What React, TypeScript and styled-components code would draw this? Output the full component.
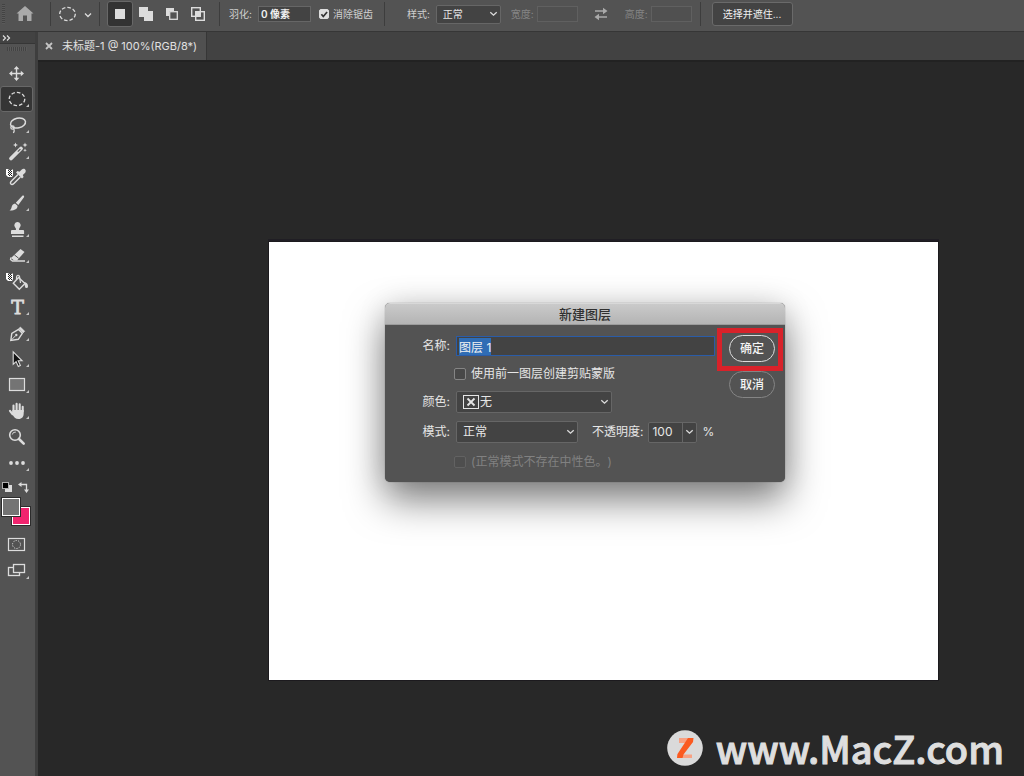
import React, { useEffect, useRef } from 'react';
import styled, { createGlobalStyle, css } from 'styled-components';

const GlobalStyle = createGlobalStyle`
  * { box-sizing: border-box; }
  html, body { margin: 0; height: 100%; }
  #root { height: 100%; }
  body {
    background: #282828;
    color: #dcdcdc;
    font: 10px/16px Inter, "Noto Sans CJK SC", sans-serif;
    text-spacing-trim: space-all;
    overflow: hidden;
  }
  button, input, select { font: inherit; color: inherit; margin: 0; padding: 0; }
  svg { display: block; flex: none; }
`;

const AppFrame = styled.div`
  display: flex;
  flex-direction: column;
  min-height: 100vh;
`;

/* ---------- options bar ---------- */

const OptionsBar = styled.header`
  display: flex;
  align-items: center;
  height: 32px;
  padding: 0 8px 3px 2px;
  background: #535353;
  border-bottom: 1px solid #363636;
  white-space: nowrap;
`;

const Grip = styled.span`
  width: 3px;
  height: 20px;
  background: repeating-linear-gradient(#434343 0 1px, #5a5a5a 1px 2px);
`;

const Divider = styled.span<{ $before?: number; $after?: number }>`
  width: 1px;
  height: 24px;
  flex: none;
  background: #3d3d3d;
  margin-left: ${p => p.$before ?? 8}px;
  margin-right: ${p => p.$after ?? 8}px;
`;

const BarButton = styled.button<{ $width?: number; $active?: boolean }>`
  display: flex;
  align-items: center;
  justify-content: center;
  flex: none;
  width: ${p => p.$width ?? 26}px;
  height: 26px;
  border: 1px solid ${p => (p.$active ? '#686868' : 'transparent')};
  border-radius: 3px;
  background: ${p => (p.$active ? '#333' : 'transparent')};
`;

const OptionLabel = styled.label<{ $before?: number; $gap?: number; $dim?: boolean }>`
  display: flex;
  align-items: center;
  gap: ${p => p.$gap ?? 6}px;
  margin-left: ${p => p.$before ?? 8}px;
  color: ${p => (p.$dim ? '#858585' : '#cfcfcf')};
`;

const OptionInput = styled.input<{ $width: number }>`
  width: ${p => p.$width}px;
  height: 16px;
  padding-left: 2px;
  border: 1px solid #666;
  background: #434343;
  color: #f0f0f0;
  font-weight: 600;
  &:disabled { background: #505050; border-color: #606060; }
`;

const SelectBox = styled.span<{ $width: number; $height: number; $inset: number }>`
  display: grid;
  align-items: center;
  width: ${p => p.$width}px;
  height: ${p => p.$height}px;
  border: 1px solid #666;
  border-radius: 2px;
  background: #434343;
  color: #e6e6e6;
  > * { grid-area: 1 / 1; }
  > svg:last-child { justify-self: end; margin-right: 2px; pointer-events: none; }
  > svg:first-child { margin-left: 6px; pointer-events: none; }
  select {
    appearance: none;
    width: 100%;
    height: 100%;
    padding-left: ${p => p.$inset}px;
    border: 0;
    background: transparent;
    outline: none;
  }
`;

const CheckInput = styled.input<{ $size: number }>`
  appearance: none;
  width: ${p => p.$size}px;
  height: ${p => p.$size}px;
  flex: none;
  border: 1px solid #858585;
  border-radius: 2px;
  background: #484848;
  &:disabled { border-color: #626262; background: #4e4e4e; }
  &:checked {
    border-color: #dedede;
    background: #dedede url("data:image/svg+xml,%3Csvg xmlns='http://www.w3.org/2000/svg' viewBox='0 0 10 10'%3E%3Cpath d='M2 5l2 2.4L8 2.6' fill='none' stroke='%23333' stroke-width='1.8'/%3E%3C/svg%3E") center / 9px no-repeat;
  }
`;

const MaskButton = styled.button`
  width: 81px;
  height: 24px;
  flex: none;
  border: 1px solid #6a6a6a;
  border-radius: 3px;
  background: #434343;
  color: #f0f0f0;
`;

/* ---------- tool bar ---------- */

const Body = styled.div`
  display: flex;
  flex: 1;
`;

const ToolBar = styled.aside`
  flex: none;
  width: 38px;
  border-right: 3px solid #3e3e3e;
  background: #535353;
`;

const Expander = styled.button`
  display: flex;
  align-items: center;
  width: 100%;
  height: 12px;
  padding-left: 2px;
  border: 0;
  border-bottom: 1px solid #363636;
  background: #424242;
`;

const ToolGrip = styled.div`
  width: 20px;
  height: 4px;
  margin: 3px 0 9px 7px;
  background: repeating-linear-gradient(90deg, #434343 0 1px, #5a5a5a 1px 2px);
`;

const ToolButton = styled.button<{ $active?: boolean }>`
  display: block;
  width: 33px;
  height: 26px;
  border: 0;
  border-radius: 3px;
  background: transparent;
  ${p => p.$active && css`
    background: #353535;
    box-shadow: inset 0 0 0 1px #686868;
  `}
`;

const ColorControls = styled.div`
  display: flex;
  justify-content: space-between;
  width: 29px;
  margin: 5px 0 4px 1px;
`;

const PlainButton = styled.button`
  display: block;
  border: 0;
  background: transparent;
`;

/* ---------- document area ---------- */

const MainColumn = styled.main`
  display: flex;
  flex: 1;
  flex-direction: column;
  min-width: 0;
`;

const TabBar = styled.nav`
  display: flex;
  height: 30px;
  background: #424242;
  border-bottom: 2px solid #222;
`;

const DocumentTab = styled.div`
  display: flex;
  align-items: center;
  gap: 9px;
  padding: 0 9px 0 7px;
  border-right: 1px solid #363636;
  background: #505050;
  font-size: 11px;
  color: #e0e0e0;
  white-space: nowrap;
`;

const Workspace = styled.section`
  position: relative;
  flex: 1;
  padding: 180px 86px 96px 231px;
  background: #282828;
`;

const Artboard = styled.div`
  position: relative;
  height: 438px;
  background: #fff;
  box-shadow: 0 0 0 1px #1c1a1e, 0 -2px 0 1px #201e24;
`;

const Dialog = styled.form`
  position: absolute;
  left: 116px;
  top: 61px;
  width: 400px;
  border-radius: 5px;
  background: #535353;
  box-shadow: 0 0 1px rgba(0, 0, 0, 0.6), 0 18px 38px rgba(0, 0, 0, 0.5), 0 0 30px rgba(0, 0, 0, 0.1);
  color: #e6e6e6;
  font-size: 12px;
`;

const DialogTitle = styled.h1`
  margin: 0;
  height: 22px;
  border-top: 1px solid #d8d8d8;
  border-bottom: 1px solid #9c9c9c;
  border-radius: 5px 5px 0 0;
  background: linear-gradient(#cacaca, #b4b4b4);
  color: #303030;
  font-size: 13px;
  font-weight: 500;
  line-height: 20px;
  text-align: center;
`;

const DialogBody = styled.div`
  display: flex;
  justify-content: space-between;
  padding: 6px 10px 5px 0;
`;

const Fields = styled.div`
  flex: 1;
`;

const FieldRow = styled.div<{ $height?: number }>`
  display: flex;
  align-items: center;
  height: ${p => p.$height ?? 30}px;
  white-space: nowrap;
`;

const FieldLabel = styled.label`
  width: 65px;
  margin-right: 6px;
  text-align: right;
`;

const CheckLabel = styled.label<{ $dim?: boolean }>`
  display: flex;
  align-items: center;
  gap: 5px;
  margin-left: 69px;
  color: ${p => (p.$dim ? '#818181' : 'inherit')};
`;

const NameInput = styled.input`
  width: 259px;
  height: 20px;
  padding-left: 2px;
  border: 1px solid #2a5ca8;
  background: #434343;
  outline: none;
  &::selection { background: #2f6db5; color: #f2f2f2; }
`;

const OpacityLabel = styled.label`
  margin: 0 5px 0 14px;
`;

const OpacityBox = styled.span`
  display: flex;
  width: 49px;
  height: 21px;
  margin-right: 5px;
  border: 1px solid #666;
  border-radius: 2px;
  background: #434343;
  input {
    width: 34px;
    padding-left: 3px;
    border: 0;
    border-right: 1px solid #666;
    background: transparent;
  }
  button {
    display: grid;
    place-items: center;
    flex: 1;
    border: 0;
    background: transparent;
  }
`;

const Actions = styled.div`
  display: flex;
  flex-direction: column;
  gap: 9px;
  padding-top: 4px;
`;

const ConfirmWrap = styled.div`
  position: relative;
`;

const PillButton = styled.button<{ $primary?: boolean }>`
  display: block;
  width: 46px;
  height: 27px;
  border: 1px solid ${p => (p.$primary ? '#dcdcdc' : '#858585')};
  border-radius: 14px;
  background: transparent;
  font-weight: 500;
  color: #f4f4f4;
`;

/* red frame drawn around the confirm button */
const Highlight = styled.span`
  position: absolute;
  inset: -7px -8px -9px -12px;
  border: 5px solid #d8222a;
  pointer-events: none;
`;

const Watermark = styled.a`
  position: absolute;
  right: 20px;
  bottom: 0;
  display: flex;
  align-items: center;
  gap: 13px;
  color: #dedede;
  font: 500 38px/56px "Noto Sans CJK SC", sans-serif;
  -webkit-text-stroke: 1px #dedede;
  text-decoration: none;
`;

/* ---------- icons ---------- */

const INK = '#dcdcdc';

const Chevron = () => (
  <svg width="9" height="6" viewBox="0 0 9 6" fill="none" stroke={INK} strokeWidth="1.3">
    <path d="M1.3 1.2l3.2 3 3.2-3" />
  </svg>
);

const Checker = () => (
  <g>
    <path d="M6 5h2l1 1h3l1-1v6l-1 2H8L6 11z" fill="#fff" />
    {[0, 1, 2, 3, 4, 5].map(r =>
      [0, 1].map(c => (
        <rect key={`${r}${c}`} x={8 + c * 2 + (r % 2)} y={6 + r} width="1" height="1" fill="#222" />
      )),
    )}
  </g>
);

const toolIcons: { name: string; corner?: boolean; active?: boolean; art: React.ReactNode }[] = [
  {
    name: '移动工具',
    art: (
      <g>
        <path d="M16.5 8v11M11 13.5h11" stroke={INK} strokeWidth="1.4" />
        <path d="M16.5 6l2.8 3.2h-5.6zM16.5 21l2.8-3.2h-5.6zM9 13.5l3.2-2.8v5.6zM24 13.5l-3.2-2.8v5.6z" fill={INK} />
      </g>
    ),
  },
  {
    name: '椭圆选框工具', corner: true, active: true,
    art: <ellipse cx="17" cy="13" rx="7.8" ry="6.6" fill="none" stroke={INK} strokeWidth="1.3" strokeDasharray="3.6 2" />,
  },
  {
    name: '套索工具', corner: true,
    art: (
      <g fill="none" stroke={INK} strokeWidth="1.5">
        <ellipse cx="18" cy="11" rx="7.6" ry="4.9" transform="rotate(-12 18 11)" />
        <circle cx="12.5" cy="15.5" r="1.7" strokeWidth="1.2" />
        <path d="M13.500 16.500c1.2 1.800.6 3.500-.2 4.500" strokeWidth="1.2" />
      </g>
    ),
  },
  {
    name: '魔棒工具', corner: true,
    art: (
      <g>
        <path d="M11 20.500L21 10.500" stroke={INK} strokeWidth="3.8" strokeLinecap="round" />
        <path d="M17.800 13.700l2.600-2.600" stroke="#535353" strokeWidth="1.2" />
        <path d="M15.500 4.500l.7 1.800 1.800.7-1.800.7-.7 1.800-.7-1.800L13 7l1.800-.7zM25 4.500l.7 1.800 1.800.7-1.800.7-.7 1.800-.7-1.800-1.800-.7 1.800-.7zM25 10.500l.5 1.300 1.300.5-1.300.5-.5 1.300-.5-1.300-1.300-.5 1.300-.5z" fill={INK} />
      </g>
    ),
  },
  {
    name: '吸管工具',
    art: (
      <g>
        <Checker />
        <path d="M18 10.500l-6.500 6.500c-1 1-1.300 2.300-.6 3 .8.700 2 .4 3-.6l6.500-6.500" fill="none" stroke={INK} strokeWidth="1.4" />
        <path d="M16 8.500l1.500-1.500 2 .8 2.300-2.300c2.400-2 5.200.8 3.400 3.200l-2.400 2.400.8 2L22 14.600z" fill={INK} />
      </g>
    ),
  },
  {
    name: '画笔工具', corner: true,
    art: (
      <g fill={INK}>
        <path d="M23.600 5.600c.7.500.7 1.200.2 1.900L18.300 15l-2.500-2.300 6.300-6.800c.5-.5 1-.6 1.500-.3z" />
        <path d="M15 13.500l2.500 2.300c.3 3.500-3.600 5-8 4.700 1.500-.9 1.700-2 2.200-3.700.5-1.800 1.700-3 3.300-3.300z" />
      </g>
    ),
  },
  {
    name: '仿制图章工具', corner: true,
    art: (
      <g fill={INK}>
        <path d="M17.500 6a3.200 3.200 0 0 1 2.300 5.400c-.8 1-.9 1.800-.6 2.600h3.600c.8 0 1.300.5 1.300 1.300V18H11v-2.700c0-.8.5-1.300 1.300-1.300h3.500c.4-.8.3-1.600-.6-2.600A3.200 3.200 0 0 1 17.500 6z" />
        <path d="M12 19.500h11.500V21H12z" />
      </g>
    ),
  },
  {
    name: '橡皮擦工具', corner: true,
    art: (
      <g>
        <path d="M20.500 7l4 3-7.500 8.500h-3l-3-2.500z" fill={INK} />
        <path d="M14.300 12.800l4.400 3.500" stroke="#535353" />
        <path d="M11 15.500l-.5 2 2 1.500H25" fill="none" stroke={INK} strokeWidth="1.3" />
      </g>
    ),
  },
  {
    name: '油漆桶工具',
    art: (
      <g>
        <Checker />
        <path d="M18.500 9.500l6.500 6-5.700 5.700-6-6z" fill="none" stroke={INK} strokeWidth="1.4" />
        <path d="M16.500 12V9.500c0-3 3-3 3.200 0l.8 5.500" fill="none" stroke={INK} strokeWidth="1.2" />
        <path d="M24 14c3 .5 4 2 4 4.500a1.500 1.500 0 0 1-3 0z" fill={INK} />
      </g>
    ),
  },
  {
    name: '文字工具', corner: true,
    art: (
      <text x="17.500" y="20" fontSize="19" fontFamily="DejaVu Serif, serif" textAnchor="middle" fill={INK} stroke={INK} strokeWidth=".8">T</text>
    ),
  },
  {
    name: '钢笔工具', corner: true,
    art: (
      <g fill="none" stroke={INK} strokeWidth="1.4">
        <path d="M10.800 20.500l1-7 6.700-4 3.800 3.800-4 6z" />
        <path d="M11 20.300l4.500-4.500" strokeWidth="1" />
        <circle cx="16.300" cy="15" r="1.200" fill={INK} stroke="none" />
        <path d="M19 8.500l4.200 4.200 1.300-1.500-4-4z" fill={INK} strokeWidth="1" />
      </g>
    ),
  },
  {
    name: '路径选择工具', corner: true,
    art: <path d="M13.200 5.800v12.500l2.900-2.700 2.200 4.900 2.100-1-2.200-4.700h3.900z" fill="#111" stroke={INK} strokeWidth="1.1" />,
  },
  {
    name: '矩形工具', corner: true,
    art: <rect x="9.500" y="6.500" width="15" height="12" fill="#747474" stroke={INK} strokeWidth="1.2" />,
  },
  {
    name: '抓手工具', corner: true,
    art: (
      <g fill="none" stroke={INK} strokeLinecap="round">
        <path d="M13.500 13V7.500M16.600 12V5.800M19.700 12V6.400M22.700 13.500V8.800" strokeWidth="2.1" />
        <path d="M10 12.800l2.500 3.400" strokeWidth="2.2" />
        <path d="M12.400 12h11.300v3.500c0 3-1.700 5.500-5.200 5.500-3.200 0-4.500-1.700-6.600-5.300z" fill={INK} stroke="none" />
      </g>
    ),
  },
  {
    name: '缩放工具',
    art: (
      <g fill="none" stroke={INK}>
        <circle cx="15" cy="11" r="5.300" strokeWidth="1.6" />
        <path d="M12.300 10.500a3 3 0 0 1 3.500-2.400" strokeWidth="1" />
        <path d="M19 15l4.700 4.700" strokeWidth="2.6" strokeLinecap="round" />
      </g>
    ),
  },
  {
    name: '编辑工具栏', corner: true,
    art: (
      <g fill={INK}>
        <circle cx="11" cy="13" r="1.900" />
        <circle cx="17" cy="13" r="1.900" />
        <circle cx="23" cy="13" r="1.900" />
      </g>
    ),
  },
];

const modes = [
  { name: '新选区', active: true, art: <rect x="4" y="4" width="10" height="10" fill={INK} /> },
  { name: '添加到选区', art: <path d="M2 2h9v4h5v10H7v-4H2z" fill={INK} /> },
  {
    name: '从选区减去',
    art: (
      <g>
        <path d="M3 3h8v3H6v5H3z" fill={INK} />
        <rect x="6.700" y="6.700" width="7.600" height="7.600" fill="#535353" stroke={INK} strokeWidth="1.3" />
      </g>
    ),
  },
  {
    name: '与选区交叉',
    art: (
      <g fill="none" stroke={INK} strokeWidth="1.4">
        <rect x="2.700" y="2.700" width="8.600" height="8.600" />
        <rect x="6.700" y="6.700" width="8.600" height="8.600" />
        <rect x="7" y="7" width="4" height="4" fill={INK} stroke="none" />
      </g>
    ),
  },
];

export default function App() {
  const nameRef = useRef<HTMLInputElement>(null);

  useEffect(() => {
    nameRef.current?.focus();
    nameRef.current?.select();
  }, []);

  return (
    <AppFrame>
      <GlobalStyle />
      <OptionsBar>
        <Grip />
        <BarButton $width={40} aria-label="主页">
          <svg width="18" height="16" viewBox="0 0 18 16" fill="#aaa">
            <path d="M9 0l8.500 7.500h-2V15H11V9.500H7V15H2.500V7.500h-2z" />
          </svg>
        </BarButton>
        <Divider $before={5} $after={3} />
        <BarButton $width={42} aria-label="椭圆选框预设">
          <svg width="35" height="16" viewBox="0 0 35 16" fill="none" stroke={INK} strokeWidth="1.3">
            <ellipse cx="9.500" cy="8" rx="7.800" ry="6.600" strokeDasharray="3.6 2" />
            <path d="M27 7.500l3 3 3-3" />
          </svg>
        </BarButton>
        <Divider $before={3} $after={7} />
        {modes.map(m => (
          <BarButton key={m.name} $active={m.active} aria-label={m.name}>
            <svg width="18" height="18" viewBox="0 0 18 18">{m.art}</svg>
          </BarButton>
        ))}
        <Divider />
        <OptionLabel $before={1}>
          羽化:
          <OptionInput $width={53} defaultValue="0 像素" />
        </OptionLabel>
        <OptionLabel $gap={4}>
          <CheckInput type="checkbox" $size={10} defaultChecked />
          消除锯齿
        </OptionLabel>
        <Divider $before={11} $after={0} />
        <OptionLabel $before={22}>
          样式:
          <SelectBox $width={65} $height={19} $inset={6}>
            <select defaultValue="正常"><option>正常</option></select>
            <Chevron />
          </SelectBox>
        </OptionLabel>
        <OptionLabel $before={10} $gap={3} $dim>
          宽度:
          <OptionInput $width={41} disabled />
        </OptionLabel>
        <BarButton $width={46} aria-label="互换宽度和高度">
          <svg width="14" height="14" viewBox="0 0 14 14" fill="#aaa">
            <path d="M1 3.300h8V.8L13.500 4 9 7.200V4.700H1zM13 9.300H5V6.800L.5 10 5 13.200v-2.500h8z" />
          </svg>
        </BarButton>
        <OptionLabel $before={1} $gap={3} $dim>
          高度:
          <OptionInput $width={41} disabled />
        </OptionLabel>
        <Divider $before={8} $after={11} />
        <MaskButton>选择并遮住...</MaskButton>
      </OptionsBar>

      <Body>
        <ToolBar>
          <Expander aria-label="展开工具栏">
            <svg width="9" height="6" viewBox="0 0 9 6" fill="none" stroke={INK} strokeWidth="1.2">
              <path d="M1 .5L3.500 3 1 5.500M5 .5L7.500 3 5 5.500" />
            </svg>
          </Expander>
          <ToolGrip />
          {toolIcons.map(t => (
            <ToolButton key={t.name} $active={t.active} aria-label={t.name}>
              <svg width="33" height="26" viewBox="0 0 33 26">
                {t.art}
                {t.corner && <path d="M29 18v3h-3z" fill="#c4c4c4" />}
              </svg>
            </ToolButton>
          ))}
          <ColorControls>
            <PlainButton aria-label="默认前景色和背景色">
              <svg width="12" height="12" viewBox="0 0 12 12">
                <rect x="4" y="4" width="7" height="7" fill={INK} />
                <rect x="1.500" y="1.500" width="6" height="6" fill="#000" stroke="#b0b0b0" />
              </svg>
            </PlainButton>
            <PlainButton aria-label="切换前景色和背景色">
              <svg width="12" height="12" viewBox="0 0 12 12">
                <path d="M3 3.500h5.500V9" fill="none" stroke={INK} strokeWidth="1.3" />
                <path d="M0 3.500L3.500 1v5zM8.500 12L6 8.500h5z" fill={INK} />
              </svg>
            </PlainButton>
          </ColorControls>
          <PlainButton aria-label="前景色和背景色">
            <svg width="32" height="29" viewBox="0 0 32 29">
              <rect x="11" y="9" width="20" height="20" fill="#2c2c2c" />
              <rect x="12.500" y="10.500" width="17" height="17" fill="#f0246e" stroke="#fff" />
              <rect x="1" y="0" width="20" height="20" fill="#2c2c2c" />
              <rect x="2.500" y="1.500" width="17" height="17" fill="#747474" stroke="#fff" />
            </svg>
          </PlainButton>
          <ToolButton aria-label="以快速蒙版模式编辑">
            <svg width="33" height="36" viewBox="0 0 33 36" fill="none" stroke={INK}>
              <rect x="8.500" y="12.500" width="16" height="12" strokeWidth="1.2" />
              <circle cx="16.500" cy="18.500" r="4" strokeDasharray="1.2 1.3" />
            </svg>
          </ToolButton>
          <ToolButton aria-label="更改屏幕模式">
            <svg width="33" height="36" viewBox="0 0 33 36" stroke={INK} strokeWidth="1.3">
              <rect x="8.500" y="15.500" width="11" height="8" fill="none" />
              <rect x="13.500" y="12.500" width="11" height="8" fill="#535353" />
              <path d="M29 24v3h-3z" fill="#c4c4c4" stroke="none" />
            </svg>
          </ToolButton>
        </ToolBar>

        <MainColumn>
          <TabBar>
            <DocumentTab>
              <PlainButton aria-label="关闭文档">
                <svg width="8" height="8" viewBox="0 0 8 8" stroke="#c4c4c4" strokeWidth="1.8">
                  <path d="M1 1l6 6M7 1L1 7" />
                </svg>
              </PlainButton>
              <span>未标题-1 @ 100%(RGB/8*)</span>
            </DocumentTab>
          </TabBar>
          <Workspace>
            <Artboard>
              <Dialog role="dialog" aria-labelledby="dialog-title" onSubmit={e => e.preventDefault()}>
                <DialogTitle id="dialog-title">新建图层</DialogTitle>
                <DialogBody>
                  <Fields>
                    <FieldRow>
                      <FieldLabel htmlFor="layer-name">名称:</FieldLabel>
                      <NameInput id="layer-name" ref={nameRef} defaultValue="图层 1" />
                    </FieldRow>
                    <FieldRow $height={26}>
                      <CheckLabel>
                        <CheckInput type="checkbox" $size={12} />
                        使用前一图层创建剪贴蒙版
                      </CheckLabel>
                    </FieldRow>
                    <FieldRow>
                      <FieldLabel htmlFor="layer-color">颜色:</FieldLabel>
                      <SelectBox $width={156} $height={22} $inset={23}>
                        <svg width="16" height="14" viewBox="0 0 16 14" fill="none" stroke="#e6e6e6">
                          <rect x=".5" y=".5" width="15" height="13" />
                          <path d="M4.500 3.500l7 7M11.500 3.500l-7 7" strokeWidth="1.8" />
                        </svg>
                        <select id="layer-color" defaultValue="无"><option>无</option></select>
                        <Chevron />
                      </SelectBox>
                    </FieldRow>
                    <FieldRow>
                      <FieldLabel htmlFor="layer-mode">模式:</FieldLabel>
                      <SelectBox $width={122} $height={22} $inset={6}>
                        <select id="layer-mode" defaultValue="正常"><option>正常</option></select>
                        <Chevron />
                      </SelectBox>
                      <OpacityLabel htmlFor="layer-opacity">不透明度:</OpacityLabel>
                      <OpacityBox>
                        <input id="layer-opacity" defaultValue="100" />
                        <button type="button" aria-label="调整不透明度"><Chevron /></button>
                      </OpacityBox>
                      %
                    </FieldRow>
                    <FieldRow>
                      <CheckLabel $dim>
                        <CheckInput type="checkbox" $size={12} disabled />
                        (正常模式不存在中性色。)
                      </CheckLabel>
                    </FieldRow>
                  </Fields>
                  <Actions>
                    <ConfirmWrap>
                      <PillButton $primary type="submit">确定</PillButton>
                      <Highlight />
                    </ConfirmWrap>
                    <PillButton type="button">取消</PillButton>
                  </Actions>
                </DialogBody>
              </Dialog>
            </Artboard>
            <Watermark href="#">
              <svg width="36" height="36" viewBox="0 0 36 36">
                <circle cx="18" cy="18" r="17.800" fill="#dadada" />
                <path d="M12 8h14v3.500l-1.500 1.500H12zM10.500 24.500H25V28H10.500z" fill="#f7a183" />
                <path d="M21 8h5.500l-.5 4-9.500 12.500L15.500 28H10l.5-4z" fill="#fb5a20" />
              </svg>
              www.MacZ.com
            </Watermark>
          </Workspace>
        </MainColumn>
      </Body>
    </AppFrame>
  );
}
